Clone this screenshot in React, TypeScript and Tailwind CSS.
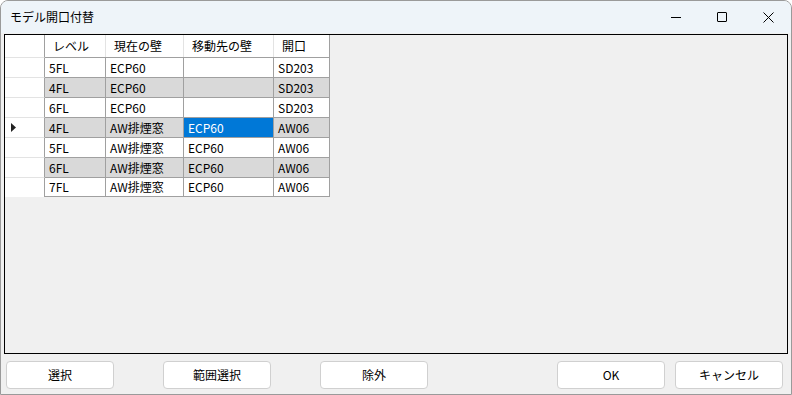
import React from 'react';

const font = { fontFamily: '"Noto Sans CJK JP", "Noto Sans", sans-serif' };

const columns = [
  { key: 'level', label: 'レベル', width: 'w-[61px]' },
  { key: 'current', label: '現在の壁', width: 'w-[78px]' },
  { key: 'target', label: '移動先の壁', width: 'w-[90px]' },
  { key: 'opening', label: '開口', width: 'w-[56px]' },
];

const rows = [
  ['5FL', 'ECP60', '', 'SD203'],
  ['4FL', 'ECP60', '', 'SD203'],
  ['6FL', 'ECP60', '', 'SD203'],
  ['4FL', 'AW排煙窓', 'ECP60', 'AW06'],
  ['5FL', 'AW排煙窓', 'ECP60', 'AW06'],
  ['6FL', 'AW排煙窓', 'ECP60', 'AW06'],
  ['7FL', 'AW排煙窓', 'ECP60', 'AW06'],
];

const currentRow = 3;
const selectedCol = 2;

const Btn = ({ label, className = '' }: { label: string; className?: string }) => (
  <button
    className={`h-[28px] w-[108px] rounded-[4px] border border-[#d0d0d0] bg-white text-[12px] text-black ${className}`}
  >
    {label}
  </button>
);

export default function App() {
  return (
    <div
      className="w-[792px] h-[395px] bg-[#f0f0f0] rounded-t-[8px] border border-[#9a9a9a] overflow-hidden flex flex-col"
      style={font}
    >
      {/* Title bar */}
      <div className="h-[32px] shrink-0 bg-[#eef4f9] flex items-center">
        <span className="pl-[9px] text-[12px] text-black">モデル開口付替</span>
        <div className="ml-auto flex items-center h-full">
          <div className="w-[46px] h-full flex items-center justify-center">
            <div className="w-[10px] h-px bg-black" />
          </div>
          <div className="w-[46px] h-full flex items-center justify-center">
            <div className="w-[10px] h-[10px] border border-black rounded-[1px]" />
          </div>
          <div className="w-[46px] h-full flex items-center justify-center">
            <svg width="11" height="11" viewBox="0 0 11 11">
              <path d="M0.5 0.5 L10.5 10.5 M10.5 0.5 L0.5 10.5" stroke="#000" strokeWidth="1" />
            </svg>
          </div>
        </div>
      </div>

      {/* Grid panel */}
      <div className="mx-[3px] mt-px h-[320px] border border-black bg-[#f0f0f0]">
        <div className="flex flex-col text-[12px] text-black">
          <div className="flex h-[22px]">
            <div className="w-[40px] bg-white border-r border-[#a0a0a0]" />
            {columns.map((c, i) => (
              <div
                key={c.key}
                className={`${c.width} bg-white flex items-center pl-[8px] border-r ${
                  i === columns.length - 1 ? 'border-[#a0a0a0]' : 'border-[#e3e3e3]'
                }`}
              >
                {c.label}
              </div>
            ))}
          </div>
          {rows.map((r, ri) => {
            const grey = ri % 2 === 1;
            return (
              <div key={ri} className="flex h-[20px]">
                <div className="w-[40px] bg-white border-t border-[#e3e3e3] border-r-[#a0a0a0] border-r flex items-center pl-[6px]">
                  {ri === currentRow && (
                    <svg width="5" height="9" viewBox="0 0 5 9">
                      <path d="M0 0 L5 4.5 L0 9 Z" fill="#222" />
                    </svg>
                  )}
                </div>
                {r.map((v, ci) => {
                  const sel = ri === currentRow && ci === selectedCol;
                  return (
                    <div
                      key={ci}
                      className={`${columns[ci].width} border-t border-r border-[#a0a0a0] flex items-center pl-[4px] whitespace-nowrap ${
                        ri === rows.length - 1 ? 'border-b' : ''
                      } ${sel ? 'bg-[#0078d7] text-white' : grey ? 'bg-[#d9d9d9]' : 'bg-white'}`}
                    >
                      {v}
                    </div>
                  );
                })}
              </div>
            );
          })}
        </div>
      </div>

      {/* Buttons */}
      <div className="flex items-center mt-[7px] px-[5px]">
        <Btn label="選択" />
        <Btn label="範囲選択" className="ml-[49px]" />
        <Btn label="除外" className="ml-[49px]" />
        <Btn label="OK" className="ml-auto" />
        <Btn label="キャンセル" className="ml-[10px] mr-[3px]" />
      </div>
    </div>
  );
}
